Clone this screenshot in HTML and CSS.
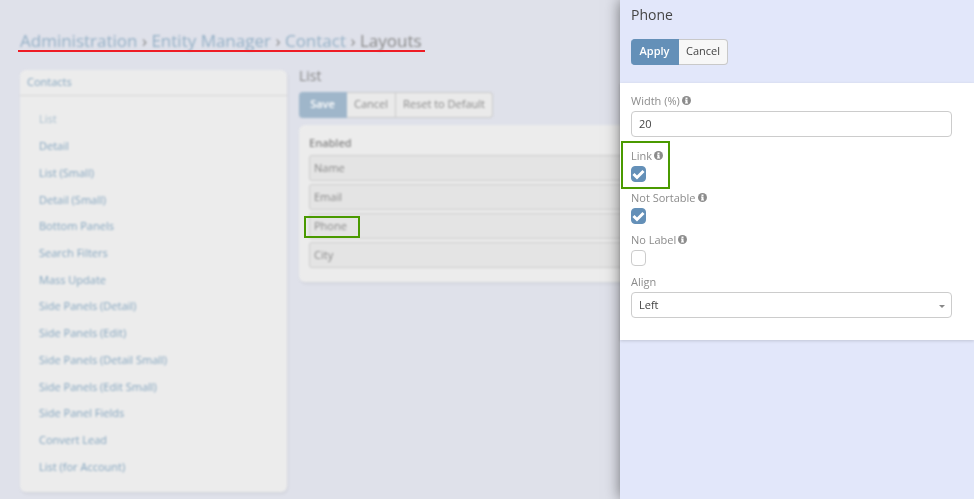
FILE: index.html
```html
<!DOCTYPE html>
<html lang="en">

<head>
    <meta charset="UTF-8">
    <meta name="viewport" content="width=device-width, initial-scale=1.0">
    <title>Layouts</title>
    <link rel="stylesheet" href="styles.css">
</head>

<body>
    <svg class="sprite" aria-hidden="true">
        <symbol id="icon-info" viewBox="0 0 18 18">
            <circle cx="9" cy="9" r="9" fill="#8c8c8c" />
            <path d="M7 3h4v3H7zM6 7h5v6h1v2H6v-2h1V9H6z" fill="#fff" />
        </symbol>
    </svg>

    <div class="page">
        <h3 class="breadcrumbs">
            <a href="#">Administration</a> <span>›</span>
            <a href="#">Entity Manager</a> <span>›</span>
            <a href="#">Contact</a> <span>›</span>
            Layouts
        </h3>
        <div class="columns">
            <div class="panel side">
                <div class="panel-heading"><a href="#">Contacts</a></div>
                <ul class="layout-list">
                    <li><a href="#" class="current">List</a></li>
                    <li><a href="#">Detail</a></li>
                    <li><a href="#">List (Small)</a></li>
                    <li><a href="#">Detail (Small)</a></li>
                    <li><a href="#">Bottom Panels</a></li>
                    <li><a href="#">Search Filters</a></li>
                    <li><a href="#">Mass Update</a></li>
                    <li><a href="#">Side Panels (Detail)</a></li>
                    <li><a href="#">Side Panels (Edit)</a></li>
                    <li><a href="#">Side Panels (Detail Small)</a></li>
                    <li><a href="#">Side Panels (Edit Small)</a></li>
                    <li><a href="#">Side Panel Fields</a></li>
                    <li><a href="#">Convert Lead</a></li>
                    <li><a href="#">List (for Account)</a></li>
                </ul>
            </div>
            <div class="content">
                <h4>List</h4>
                <div class="btn-group">
                    <button type="button" class="btn btn-primary">Save</button>
                    <button type="button" class="btn">Cancel</button>
                    <button type="button" class="btn">Reset to Default</button>
                </div>
                <div class="panel enabled">
                    <h5>Enabled</h5>
                    <ul class="cells">
                        <li>Name</li>
                        <li>Email</li>
                        <li>Phone</li>
                        <li>City</li>
                    </ul>
                </div>
            </div>
        </div>
    </div>

    <!-- Highlights over the page -->
    <div class="mark-line"></div>
    <div class="mark-box mark-phone"></div>

    <form class="drawer">
        <div class="drawer-header">
            <h4>Phone</h4>
            <div class="btn-group">
                <button type="button" class="btn btn-primary">Apply</button>
                <button type="button" class="btn">Cancel</button>
            </div>
        </div>
        <div class="drawer-body">
            <div class="field">
                <label for="width">Width (%) <svg class="info"><use href="#icon-info" /></svg></label>
                <input type="text" id="width" class="control" value="20">
            </div>
            <div class="field field-check">
                <label for="link">Link <svg class="info"><use href="#icon-info" /></svg></label>
                <div class="check">
                    <input type="checkbox" id="link" checked>
                    <svg viewBox="0 0 15 16"><path d="M2.500 8 6 11.500 12.500 5" /></svg>
                </div>
                <div class="mark-box mark-link"></div>
            </div>
            <div class="field field-check">
                <label for="notSortable">Not Sortable <svg class="info"><use href="#icon-info" /></svg></label>
                <div class="check">
                    <input type="checkbox" id="notSortable" checked>
                    <svg viewBox="0 0 15 16"><path d="M2.500 8 6 11.500 12.500 5" /></svg>
                </div>
            </div>
            <div class="field field-check">
                <label for="noLabel">No Label <svg class="info"><use href="#icon-info" /></svg></label>
                <div class="check">
                    <input type="checkbox" id="noLabel">
                </div>
            </div>
            <div class="field">
                <label for="align">Align</label>
                <div class="select">
                    <select id="align" class="control">
                        <option>Left</option>
                        <option>Right</option>
                    </select>
                    <svg class="caret" viewBox="0 0 6 3"><path d="M0 0h6L3 3z" /></svg>
                </div>
            </div>
        </div>
    </form>
</body>

</html>
```

FILE: styles.css
```css
* {
    box-sizing: border-box;
}

body {
    margin: 0;
    font-family: 'Open Sans', sans-serif;
    font-size: 11px;
    line-height: 18px;
    color: #444;
    background-color: #dfe1ea;
    overflow: hidden;
}

h3,
h4,
h5,
ul {
    margin: 0;
    padding: 0;
    font-weight: normal;
    list-style: none;
}

a {
    color: #84a5bf;
    text-decoration: none;
}

.sprite {
    position: absolute;
    width: 0;
    height: 0;
}

/* Page behind the drawer */
.page {
    display: flex;
    flex-direction: column;
    min-height: 100vh;
    padding: 29px 20px 7px;
    color: #888;
    filter: blur(1px);
}

.breadcrumbs {
    font-size: 17px;
    line-height: 24px;
    margin-bottom: 17px;
    white-space: nowrap;
}

.breadcrumbs a {
    color: #94b0c6;
}

.columns {
    flex: 1;
    display: flex;
    gap: 12px;
}

.panel {
    background-color: #ececec;
    border-radius: 6px;
    box-shadow: 1px 2px 3px rgba(0, 0, 0, 0.06);
}

.side {
    display: flex;
    flex-direction: column;
    width: 267px;
}

.panel-heading {
    height: 26px;
    padding: 3px 7px;
    border-bottom: 1px solid #d6d6d6;
}

.layout-list {
    flex: 1;
    display: flex;
    flex-direction: column;
    padding: 10px 19px 12px;
}

.layout-list li {
    flex: 1;
    display: flex;
    align-items: center;
}

.layout-list .current {
    color: #a9bfcf;
}

.content {
    flex: 1;
}

h4 {
    font-size: 14px;
    line-height: 20px;
}

.content h4 {
    margin: -4px 0 6px;
}

.btn-group {
    display: flex;
}

.btn {
    height: 26px;
    padding: 0 7px 2px;
    border: 1px solid #c9c9c9;
    border-left: 0;
    background-color: #f7f7f7;
    font: inherit;
    line-height: 18px;
    color: #444;
    cursor: pointer;
}

.btn:last-child {
    border-radius: 0 4px 4px 0;
}

.btn-primary {
    width: 48px;
    border-color: #6490b8;
    border-radius: 4px 0 0 4px;
    background-color: #6490b8;
    color: #fff;
    font-weight: 600;
}

.page .btn {
    border-color: #cacaca;
    background-color: #eaeaea;
    color: #888;
}

.page .btn-primary {
    border-color: #9fb6ca;
    background-color: #9fb6ca;
    color: #fff;
}

.enabled {
    margin-top: 7px;
    padding: 9px 10px 14px;
}

h5 {
    font-size: 11px;
    font-weight: 600;
    margin-bottom: 3px;
}

.cells {
    display: grid;
    gap: 3px;
}

.cells li {
    padding: 3px 4px;
    border: 1px solid #cdcdcd;
    border-radius: 3px;
    background-color: #e4e4e4;
}

/* Highlights */
.mark-line {
    position: absolute;
    top: 50px;
    left: 18px;
    width: 407px;
    height: 2px;
    background-color: #ee1c25;
}

.mark-box {
    position: absolute;
    border: 2px solid #4a9a00;
    pointer-events: none;
}

.mark-phone {
    top: 216px;
    left: 304px;
    width: 56px;
    height: 22px;
}

.mark-link {
    top: -6px;
    left: -10px;
    width: 49px;
    height: 48px;
}

/* Drawer */
.drawer {
    position: fixed;
    top: 0;
    right: 0;
    bottom: 0;
    width: 354px;
    background-color: #e2e7fa;
    box-shadow: 0 0 14px rgba(0, 0, 0, 0.5);
}

.drawer-header {
    padding: 5px 11px 18px;
}

.drawer-header h4 {
    margin-bottom: 14px;
}

.drawer-body {
    padding: 9px 22px 12px 11px;
    background-color: #fff;
    box-shadow: 0 1px 3px rgba(0, 0, 0, 0.15);
}

.field {
    position: relative;
    margin-bottom: 10px;
}

.drawer-body .field:last-child {
    margin-bottom: 0;
    padding-bottom: 10px;
}

.field-check {
    margin-bottom: 7px;
}

.field label {
    display: flex;
    align-items: center;
    gap: 2px;
    height: 19px;
    padding-bottom: 2px;
    color: #8c8c8c;
}

.info {
    width: 9px;
    height: 9px;
}

.control {
    display: block;
    width: 100%;
    height: 26px;
    padding: 0 7px 1px;
    border: 1px solid #ccc;
    border-radius: 4px;
    background-color: #fff;
    font: inherit;
    color: #444;
    appearance: none;
}

.select {
    position: relative;
}

.caret {
    position: absolute;
    top: 13px;
    right: 7px;
    width: 6px;
    height: 3px;
    fill: #888;
    pointer-events: none;
}

.check {
    position: relative;
    width: 15px;
    height: 16px;
}

.check input {
    display: block;
    width: 15px;
    height: 16px;
    margin: 0;
    border: 1px solid #ccc;
    border-radius: 4px;
    background-color: #fff;
    appearance: none;
}

.check input:checked {
    border-color: #6490b8;
    background-color: #6490b8;
}

.check svg {
    position: absolute;
    top: 0;
    left: 0;
    width: 15px;
    height: 16px;
    fill: none;
    stroke: #fff;
    stroke-width: 3;
    pointer-events: none;
}
```
